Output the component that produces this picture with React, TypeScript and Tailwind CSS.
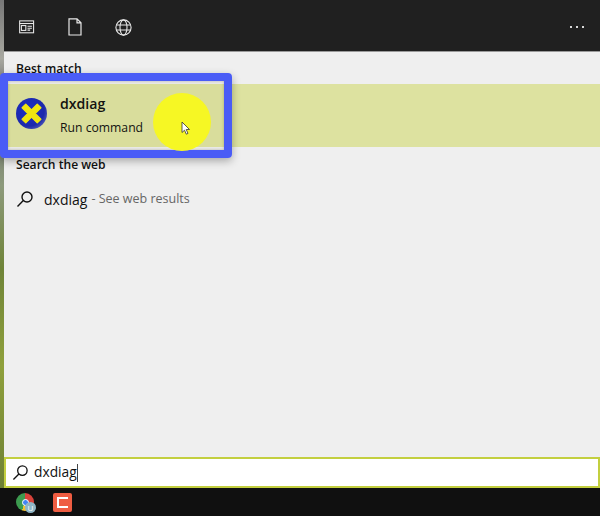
export default function App() {
  return (
    <div className="relative w-[600px] h-[516px] overflow-hidden flex flex-col bg-[#101010] font-['Open_Sans','Noto_Sans',sans-serif]">
      <div className="flex h-[488px]">
        <div className="w-[4px] bg-[linear-gradient(to_bottom,#777_0%,#a8a8a0_12%,#666_20%,#8d9a7c_38%,#6f8438_55%,#8fa03c_75%,#6d8034_100%)]" />
        <div className="flex-1 flex flex-col bg-[#efefef]">
          <div className="h-[52px] bg-[#202020] border-b border-[#9a9a9a] flex items-center text-[#e8e8e8] shrink-0">
            <svg className="ml-[15px] mt-[3px]" width="17" height="15" viewBox="0 0 19 17" fill="none" stroke="currentColor" strokeWidth="1.2">
              <rect x="0.6" y="1" width="15.8" height="13.5" />
              <path d="M0.6 4h15.8" />
              <rect x="2.6" y="6.3" width="5" height="5.5" />
              <path d="M9.5 7h5M9.5 9.3h5M9.5 11.5h3" />
            </svg>
            <svg className="ml-[32px] mt-[3px]" width="14" height="18" viewBox="0 0 14 18" fill="none" stroke="currentColor" strokeWidth="1.2">
              <path d="M1 .8h8l4 4v12.2H1zM9 .8v4h4" />
            </svg>
            <svg className="ml-[33px] mt-[3px]" width="17" height="17" viewBox="0 0 17 17" fill="none" stroke="currentColor" strokeWidth="1.1">
              <circle cx="8.500" cy="8.500" r="7.600" />
              <ellipse cx="8.500" cy="8.500" rx="3.500" ry="7.600" />
              <path d="M1.300 6h14.400M1.300 11h14.400" />
            </svg>
            <div className="ml-auto mr-[16px] flex gap-[4px] mt-[3px]">
              <span className="w-[2px] h-[2px] bg-[#d8d8d8]" />
              <span className="w-[2px] h-[2px] bg-[#d8d8d8]" />
              <span className="w-[2px] h-[2px] bg-[#d8d8d8]" />
            </div>
          </div>
          <div className="h-[32px] pl-[12px] pt-[8px] text-[12.100px] leading-[18px] font-semibold text-[#111]">Best match</div>
          <div className="h-[63px] bg-[#dde2a0] flex items-center pl-[12px]">
            <div className="w-[31px] h-[31px] rounded-full shrink-0 bg-[radial-gradient(circle_at_40%_40%,#1a2ccc_0%,#1a28b0_60%,#8e8fc8_100%)] flex items-center justify-center -mt-[5px]">
              <svg width="23" height="23" viewBox="0 0 22 22">
                <path d="M5.500 2 11 7.500 16.500 2 20 5.500 14.500 11 20 16.500 16.500 20 11 14.500 5.500 20 2 16.500 7.500 11 2 5.500z" fill="#f5ea10" stroke="#f5ea10" strokeWidth="1.200" strokeLinejoin="round" />
              </svg>
            </div>
            <div className="ml-[13px] flex flex-col text-[#111]">
              <span className="text-[14.100px] leading-[20px] font-semibold">dxdiag</span>
              <span className="text-[12.200px] leading-[18px] mt-[5px]">Run command</span>
            </div>
          </div>
          <div className="h-[33px] pl-[12px] pt-[9px] text-[12.100px] leading-[18px] font-semibold text-[#111]">Search the web</div>
          <div className="flex items-center pl-[12px] h-[38px]">
            <svg width="18" height="18" viewBox="0 0 18 18" fill="none" stroke="#111" strokeWidth="1.400">
              <circle cx="11" cy="7" r="5" />
              <path d="M7.300 10.500 1.500 16.500" />
            </svg>
            <span className="ml-[10px] text-[14px] text-[#111]">dxdiag</span>
            <span className="ml-[4px] text-[12.500px] text-[#666]">- See web results</span>
          </div>
          <div className="mt-auto h-[31px] bg-white border-2 border-[#c3cf3f] flex items-center pl-[6px] shrink-0">
            <svg width="17" height="17" viewBox="0 0 18 18" fill="none" stroke="#111" strokeWidth="1.400">
              <circle cx="11" cy="7" r="5" />
              <path d="M7.300 10.500 1.500 16.500" />
            </svg>
            <span className="ml-[5px] text-[13.800px] text-[#111]">dxdiag</span>
            <span className="w-px h-[18px] bg-[#444]" />
          </div>
        </div>
      </div>
      <div className="flex-1 bg-[#101010] flex items-center pl-[16px]">
        <div className="relative w-[18px] h-[18px] rounded-full bg-[conic-gradient(#d8423a_0deg_120deg,#f1c232_120deg_200deg,#3c9b4f_200deg_360deg)] flex items-center justify-center">
          <span className="w-[7px] h-[7px] rounded-full bg-[#4285f4] border border-white" />
          <span className="absolute -right-[2px] -bottom-[2px] w-[11px] h-[11px] rounded-full bg-[#8fb6c6] text-white text-[8px] leading-[11px] text-center">U</span>
        </div>
        <div className="ml-[19px] w-[19px] h-[19px] bg-[#ef5d42] rounded-[2px] flex items-center justify-center">
          <svg width="13" height="13" viewBox="0 0 13 13" fill="none" stroke="#fff" strokeWidth="2">
            <path d="M12 2H2v9h10" />
          </svg>
        </div>
      </div>

      <div className="absolute left-0 top-[73px] w-[232px] h-[85px] rounded-[4px] border-[8px] border-[#4a5cf6] bg-[rgba(80,80,40,0.03)] shadow-[0_3px_8px_rgba(0,0,0,0.3),inset_0_0_3px_rgba(0,0,0,0.25)]" />
      <div className="absolute left-[153px] top-[93px] w-[58px] h-[58px] rounded-full bg-[#f6f724]" />
      <svg className="absolute left-[181px] top-[121px]" width="10" height="15" viewBox="0 0 10 15">
        <path d="M1 1v10.500l2.500-2.300 1.800 4 1.700-.8-1.800-3.900H8.500z" fill="#fff" stroke="#333" strokeWidth="0.8" />
      </svg>
    </div>
  );
}
